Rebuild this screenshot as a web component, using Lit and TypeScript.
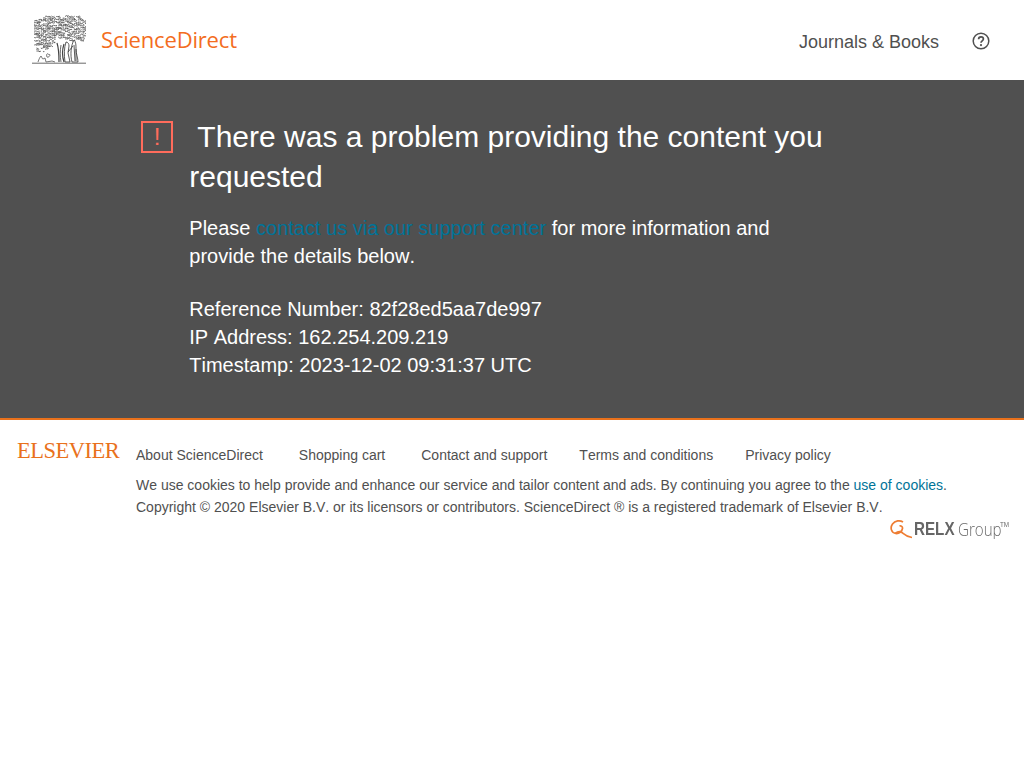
import { LitElement, html, css, svg } from "lit";
import { customElement } from "lit/decorators.js";

function treeMarks() {
  // Deterministic scribble that gives the engraved canopy its texture.
  let seed = 11;
  const rnd = () => ((seed = (seed * 16807) % 2147483647) / 2147483647);
  const out: string[] = [];
  const inside = (x: number, y: number) => {
    if (y < 5) return x > 6 + (5 - y) * 1.2 && x < 50 - (5 - y);
    if (y < 22) return x > 0 && x < 54;
    if (y < 27) return x > 0 && x < 51 && !(x > 24 && x < 31 && y > 23);
    if (y < 37) return x > 0.5 + (y - 27) * 0.4 && x < 22 - (y - 27) * 0.9;
    return false;
  };
  for (let y = 1.5; y < 37; y += 1.5) {
    for (let x = 0; x < 54; x += 2.2) {
      if (!inside(x, y) || rnd() < 0.2) continue;
      const dx = 0.8 + rnd() * 1.4;
      const dy = (rnd() - 0.5) * 3.4;
      out.push(`M${x.toFixed(1)} ${y.toFixed(1)}q${dx.toFixed(1)} ${dy.toFixed(1)} ${(dx * 1.6).toFixed(1)} ${((rnd() - 0.5) * 1.4).toFixed(1)}`);
    }
  }
  return out.join("");
}

@customElement("app-root")
export class AppRoot extends LitElement {
  static styles = css`
    :host { display: block; font-family: "Liberation Sans", Arial, sans-serif; font-kerning: none; color: #505050; background: #fff; }
    a { text-decoration: none; color: inherit; }
    .top { height: 80px; display: flex; align-items: center; justify-content: space-between; padding: 0 34px 0 32px; box-sizing: border-box; }
    .brand { display: flex; align-items: center; gap: 15px; }
    .tree { width: 54px; height: 50px; display: block; margin-top: -1px; filter: blur(0.3px); }
    .wordmark { font-family: "Open Sans", sans-serif; font-kerning: normal; font-size: 22px; line-height: 30px; color: #f36d21; margin-top: -3px; letter-spacing: -0.18px; }
    .topnav { display: flex; align-items: center; gap: 33px; font-size: 18px; line-height: 24px; margin-top: 3px; }
    .help { width: 18px; height: 18px; display: block; margin-top: -2px; }
    .problem { background: #505050; border-bottom: 2px solid #e9711c; color: #fff; padding: 37px 190px 40px 189.300px; height: 340px; box-sizing: border-box; }
    h1 { margin: 0 0 17px; font-weight: 400; font-size: 30px; line-height: 40px; max-width: 640px; }
    .alert { display: inline-flex; align-items: center; justify-content: center; box-sizing: border-box; width: 32px; height: 32px; border: 2px solid #ff6c5c; color: #ff6c5c; font-size: 24px; line-height: 1; margin: 0 16px 0 -48.300px; vertical-align: 2px; }
    p { margin: 0; font-size: 20px; line-height: 28px; }
    .lead { max-width: 600px; margin-bottom: 25px; }
    .lead a { color: #007398; }
    .foot { display: flex; padding: 22px 16px 0 17px; align-items: flex-start; }
    .elsevier { width: 119px; flex: none; font-family: "Liberation Serif", serif; font-kerning: normal; font-size: 22.500px; line-height: 24px; color: #e9711c; letter-spacing: -0.5px; margin-top: -3px; }
    .info { flex: 1; font-size: 14px; line-height: 22px; }
    .links { display: flex; line-height: 22px; margin-bottom: 8px; margin-top: 2px; }
    .links a { margin-right: 36px; }
    .links a:nth-child(3) { margin-right: 32px; }
    .links a:nth-child(4) { margin-right: 32px; }
    .info p { font-size: 14px; line-height: 22px; }
    .info p a { color: #007398; }
    .relx { display: flex; justify-content: flex-end; align-items: center; height: 20px; margin-top: 1px; color: #6a6a6a; }
    .relx svg { width: 24px; height: 20px; display: block; margin-right: 0; }
    .relx b { display: block; width: 40px; font-size: 19px; line-height: 20px; color: #666; transform: scaleX(0.8); transform-origin: left center; white-space: nowrap; margin-right: 4px; }
    .relx span { display: block; width: 42px; font-family: "Open Sans", sans-serif; font-weight: 300; font-size: 18px; line-height: 20px; transform: scaleX(0.84); transform-origin: left center; white-space: nowrap; }
    .relx sup { display: block; width: 8px; font-size: 7px; line-height: 1; align-self: flex-start; margin-top: 2px; transform: scaleX(0.9); transform-origin: left center; }
  `;

  render() {
    return html`
      <header class="top">
        <a class="brand" href="#">
          <svg class="tree" viewBox="0 0 54 50" fill="none" stroke="#4a4a4a" stroke-width=".8" aria-label="Elsevier tree">
            ${svg`<path d=${treeMarks()}/>
            <path d="M27 47c0-7 0-13-2-19M32 47c-2-6-2-12 0-18" stroke-width="1.200" stroke="#444"/>
            <path d="M29 47c-1-6-1-11 0-17" stroke="#444"/>
            <path d="M42 25c2 2 2 5 2 9 0 5 2 9 2 13h-6c-2-7-1-17 2-22Z" fill="#fff" stroke="#333"/>
            <path d="M42 30l1 16M44 34l0 12" stroke="#333"/>
            <path d="M34 27c2 0 3 2 3 4l-1 7 2 9h-5c-1-7-1-14 1-20Z" fill="#fff" stroke="#333"/>
            <path d="M36 37l5-6" stroke="#333"/>
            <path d="M0 48.200h54" stroke="#444"/>
            <path d="M6 47c1-3 2-5 3-6 1 1 1 3 2 3l2-1 1 4M14 47l6-1 3 1M15 42c-1-2 0-4 1-3s2 0 2 1-2 3-3 2Z" stroke="#555"/>`}
          </svg>
          <span class="wordmark">ScienceDirect</span>
        </a>
        <nav class="topnav">
          <a href="#">Journals &amp; Books</a>
          <a href="#" aria-label="Help">
            <svg class="help" viewBox="0 0 18 18" fill="none" stroke="#505050">
              <circle cx="9" cy="9" r="7.800" stroke-width="1.500"/>
              <path d="M6.600 7.200c0-1.500 1-2.400 2.400-2.400s2.400.9 2.400 2.200c0 1.800-2.400 1.900-2.400 3.700" stroke-width="1.700"/>
              <circle cx="9" cy="13.100" r="1.100" fill="#505050" stroke="none"/>
            </svg>
          </a>
        </nav>
      </header>
      <main class="problem">
        <h1><span class="alert">!</span> There was a problem providing the content you requested</h1>
        <p class="lead">Please <a href="#">contact us via our support center</a> for more information and provide the details below.</p>
        <p>Reference Number: 82f28ed5aa7de997</p>
        <p>IP Address: 162.254.209.219</p>
        <p>Timestamp: 2023-12-02 09:31:37 UTC</p>
      </main>
      <footer class="foot">
        <div class="elsevier">ELSEVIER</div>
        <div class="info">
          <div class="links">
            <a href="#">About ScienceDirect</a>
            <a href="#">Shopping cart</a>
            <a href="#">Contact and support</a>
            <a href="#">Terms and conditions</a>
            <a href="#">Privacy policy</a>
          </div>
          <p>We use cookies to help provide and enhance our service and tailor content and ads. By continuing you agree to the <a href="#">use of cookies</a>.</p>
          <p>Copyright © 2020 Elsevier B.V. or its licensors or contributors. ScienceDirect ® is a registered trademark of Elsevier B.V.</p>
          <div class="relx">
            <svg viewBox="0 0 24 20" fill="none" stroke="#ee7d33" stroke-width="1.700">
              <path d="M13 3C10 1 5 1.500 2.500 5 0 8.500 1 14 6 14.500c3 .3 6-2 6.500-5 .3-2-1.500-3-3-2.500"/>
              <path d="M5 14.500c2-1.500 5-2.500 7-1 3 2.500 5 4.500 10 5"/>
            </svg>
            <b>RELX</b><span>Group</span><sup>TM</sup>
          </div>
        </div>
      </footer>
    `;
  }
}
